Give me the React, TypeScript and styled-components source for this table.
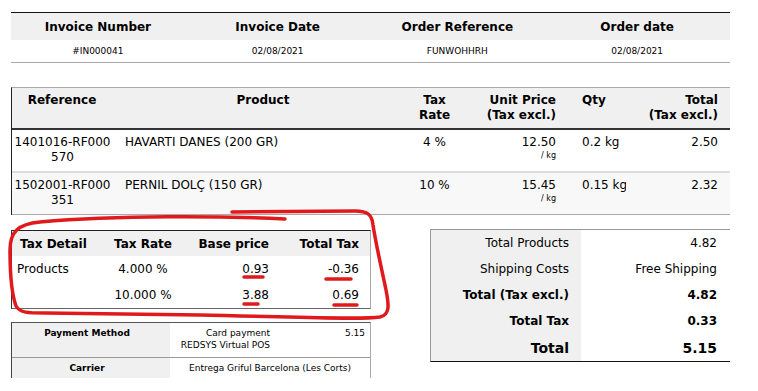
import styled, { createGlobalStyle } from 'styled-components';

const GlobalStyle = createGlobalStyle`
  html, body {
    margin: 0;
    padding: 0;
    background: #fff;
  }
  body {
    font-family: 'DejaVu Sans', 'Liberation Sans', sans-serif;
    color: #000;
  }
`;

interface ProductLine {
  reference: string;
  name: string;
  taxRate: string;
  unitPrice: string;
  qty: string;
  total: string;
}

const products: ProductLine[] = [
  { reference: '1401016-RF000570', name: 'HAVARTI DANES (200 GR)', taxRate: '4 %', unitPrice: '12.50', qty: '0.2 kg', total: '2.50' },
  { reference: '1502001-RF000351', name: 'PERNIL DOLÇ (150 GR)', taxRate: '10 %', unitPrice: '15.45', qty: '0.15 kg', total: '2.32' },
];

const totals = [
  { label: 'Total Products', value: '4.82', weight: 'normal', size: 12 },
  { label: 'Shipping Costs', value: 'Free Shipping', weight: 'normal', size: 12 },
  { label: 'Total (Tax excl.)', value: '4.82', weight: 'bold', size: 12 },
  { label: 'Total Tax', value: '0.33', weight: 'bold', size: 12 },
  { label: 'Total', value: '5.15', weight: 'bold', size: 14 },
];

function App() {
  return (
    <Page>
      <GlobalStyle />
      <InfoGrid>
        <InfoHead>Invoice Number</InfoHead>
        <InfoHead>Invoice Date</InfoHead>
        <InfoHead>Order Reference</InfoHead>
        <InfoHead>Order date</InfoHead>
        <InfoCell>#IN000041</InfoCell>
        <InfoCell>02/08/2021</InfoCell>
        <InfoCell>FUNWOHHRH</InfoCell>
        <InfoCell>02/08/2021</InfoCell>
      </InfoGrid>

      <ProductGrid>
        <ProdHead $align="center" $pl={4} $pr={12}>Reference</ProdHead>
        <ProdHead $align="center">Product</ProdHead>
        <ProdHead $align="center">Tax<br />Rate</ProdHead>
        <ProdHead $align="right">Unit Price<br />(Tax excl.)</ProdHead>
        <ProdHead $align="left" $pl={14}>Qty</ProdHead>
        <ProdHead $align="right">Total<br />(Tax excl.)</ProdHead>
        {products.map((p, i) => (
          <ProductRow key={p.reference} $odd={i % 2 === 1} $last={i === products.length - 1}>
            <RefCell>{p.reference}</RefCell>
            <ProdCell $align="left" $pl={5}>{p.name}</ProdCell>
            <ProdCell $align="center">{p.taxRate}</ProdCell>
            <ProdCell $align="right">
              {p.unitPrice}
              <Unit>/ kg</Unit>
            </ProdCell>
            <ProdCell $align="left" $pl={14} $pr={0}>{p.qty}</ProdCell>
            <ProdCell $align="right">{p.total}</ProdCell>
          </ProductRow>
        ))}
      </ProductGrid>

      <Bottom>
        <LeftColumn>
          <TaxGrid>
            <TaxHead $align="left">Tax Detail</TaxHead>
            <TaxHead $align="center">Tax Rate</TaxHead>
            <TaxHead $align="right">Base price</TaxHead>
            <TaxHead $align="right">Total Tax</TaxHead>
            <TaxCell $align="left">Products</TaxCell>
            <TaxCell $align="center">4.000 %</TaxCell>
            <TaxCell $align="right">0.93</TaxCell>
            <TaxCell $align="right">-0.36</TaxCell>
            <TaxCell $align="left"></TaxCell>
            <TaxCell $align="center">10.000 %</TaxCell>
            <TaxCell $align="right">3.88</TaxCell>
            <TaxCell $align="right">0.69</TaxCell>
          </TaxGrid>

          <PaymentGrid>
            <PayLabel $tall>Payment Method</PayLabel>
            <PayName>
              Card payment
              <br />
              REDSYS Virtual POS
            </PayName>
            <PayAmount>5.15</PayAmount>
            <PayLabel>Carrier</PayLabel>
            <PayCarrier>Entrega Griful Barcelona (Les Corts)</PayCarrier>
          </PaymentGrid>
        </LeftColumn>

        <TotalsGrid>
          {totals.map((t, i) => (
            <TotalsRow key={t.label} $last={i === totals.length - 1}>
              <TotalsLabel $weight={t.weight} $size={t.size}>{t.label}</TotalsLabel>
              <TotalsValue $weight={t.weight} $size={t.size}>{t.value}</TotalsValue>
            </TotalsRow>
          ))}
        </TotalsGrid>
      </Bottom>

      <Annotation width="758" height="391" viewBox="0 0 758 391">
        <path d="M 285 219 C 220 216, 120 215, 40 222 C 18 224, 10 232, 10 250 C 10 275, 12 295, 16 306 C 20 313, 28 313, 45 313 L 200 315 C 300 317, 360 320, 380 317 C 390 315, 389 305, 386 290 C 382 270, 376 245, 373 225 C 372 215, 368 211, 355 211 L 232 212" />
        <path d="M 244 277 L 263 277" />
        <path d="M 326 279 L 351 279" />
        <path d="M 244 304 L 258 304" />
        <path d="M 334 305 L 357 305" />
      </Annotation>
    </Page>
  );
}

export default App;

const Page = styled.div`
  position: relative;
  width: 758px;
  height: 391px;
  box-sizing: border-box;
  padding: 12px 28px 0 11px;
  overflow: hidden;
`;

const InfoGrid = styled.div`
  display: grid;
  grid-template-columns: repeat(4, 1fr);
  border-top: 1px solid #111;
  border-bottom: 1px solid #aaa;
`;

const InfoHead = styled.div`
  height: 27px;
  display: flex;
  align-items: center;
  justify-content: center;
  padding-right: 6px;
  background: #f0f0f0;
  font-size: 12px;
  font-weight: bold;
`;

const InfoCell = styled.div`
  height: 22px;
  display: flex;
  align-items: center;
  justify-content: center;
  padding-right: 6px;
  font-size: 9px;
`;

const ProductGrid = styled.div`
  margin-top: 24px;
  display: grid;
  grid-template-columns: 108px 286px 57px 105px 58px 1fr;
  border-top: 1px solid #aaa;
  border-left: 1px solid #222;
`;

const ProdHead = styled.div<{ $align: string; $pl?: number; $pr?: number }>`
  height: 42px;
  box-sizing: border-box;
  padding: 5px ${(p) => p.$pr ?? 12}px 0 ${(p) => p.$pl ?? 12}px;
  background: #f0f0f0;
  border-bottom: 2px solid #333;
  font-size: 12px;
  font-weight: bold;
  line-height: 15px;
  text-align: ${(p) => p.$align};
`;

const ProductRow = styled.div<{ $odd: boolean; $last: boolean }>`
  display: contents;

  & > div {
    height: ${(p) => (p.$last ? '42px' : '43px')};
    background: ${(p) => (p.$odd ? '#f8f8f8' : '#fff')};
    border-bottom: ${(p) => (p.$last ? '1px solid #aaa' : '2px solid #ddd')};
  }
`;

const ProdCell = styled.div<{ $align: string; $pl?: number; $pr?: number }>`
  box-sizing: border-box;
  padding: 5px ${(p) => p.$pr ?? 12}px 0 ${(p) => p.$pl ?? 12}px;
  font-size: 12px;
  line-height: 15px;
  text-align: ${(p) => p.$align};
  white-space: nowrap;
`;

const RefCell = styled.div`
  box-sizing: border-box;
  padding: 5px 8px 0 1px;
  font-size: 12px;
  line-height: 15px;
  text-align: center;
  word-break: break-all;
`;

const Unit = styled.div`
  font-size: 8px;
  line-height: 12px;
`;

const Bottom = styled.div`
  margin-top: 15px;
  display: grid;
  grid-template-columns: 360px 300px;
  justify-content: space-between;
  align-items: start;
`;

const LeftColumn = styled.div`
  display: flex;
  flex-direction: column;
  gap: 13px;
`;

const TaxGrid = styled.div`
  display: grid;
  grid-template-columns: 88px 86px 94px 1fr;
  border-top: 1px solid #222;
  border-left: 1px solid #333;
  border-right: 1px solid #aaa;
  border-bottom: 1px solid #666;
`;

const alignToJustify = (a: string) =>
  a === 'left' ? 'flex-start' : a === 'right' ? 'flex-end' : 'center';

const alignToPadding = (a: string) =>
  a === 'left' ? '0 4px 0 8px' : a === 'right' ? '0 11px 0 4px' : '0';

const TaxHead = styled.div<{ $align: string }>`
  height: 25px;
  display: flex;
  align-items: center;
  justify-content: ${(p) => alignToJustify(p.$align)};
  padding: ${(p) => alignToPadding(p.$align)};
  background: #f0f0f0;
  font-size: 12px;
  font-weight: bold;
  white-space: nowrap;
`;

const TaxCell = styled.div<{ $align: string }>`
  height: 26px;
  display: flex;
  align-items: center;
  justify-content: ${(p) => alignToJustify(p.$align)};
  padding: ${(p) => (p.$align === 'left' ? '0 4px 0 5px' : alignToPadding(p.$align))};
  font-size: 12px;
  white-space: nowrap;
`;

const PaymentGrid = styled.div`
  display: grid;
  grid-template-columns: 158px 106px 1fr;
  border-top: 1px solid #555;
  border-left: 1px solid #444;
  border-right: 1px solid #aaa;
  font-size: 9px;
  line-height: 12px;
`;

const PayLabel = styled.div<{ $tall?: boolean }>`
  height: ${(p) => (p.$tall ? '35px' : '20px')};
  box-sizing: border-box;
  padding: 4px 8px 0 0;
  background: #f0f0f0;
  font-weight: bold;
  text-align: center;
  border-bottom: ${(p) => (p.$tall ? '1px solid #999' : 'none')};
`;

const PayName = styled.div`
  padding: 4px 6px 0 0;
  text-align: right;
  white-space: nowrap;
  border-bottom: 1px solid #999;
`;

const PayAmount = styled.div`
  padding: 4px 5px 0 0;
  text-align: right;
  border-bottom: 1px solid #999;
`;

const PayCarrier = styled.div`
  grid-column: span 2;
  padding: 4px 0 0 0;
  text-align: center;
  white-space: nowrap;
`;

const TotalsGrid = styled.div`
  display: grid;
  grid-template-columns: 150px 1fr;
  border-top: 1px solid #999;
  border-left: 1px solid #999;
  border-bottom: 1px solid #111;
  margin-top: -1px;
`;

const TotalsRow = styled.div<{ $last: boolean }>`
  display: contents;

  & > div {
    height: ${(p) => (p.$last ? '27px' : '26px')};
  }
`;

const TotalsLabel = styled.div<{ $weight: string; $size: number }>`
  display: flex;
  align-items: center;
  justify-content: flex-end;
  padding-right: 12px;
  background: #f0f0f0;
  font-size: ${(p) => p.$size}px;
  font-weight: ${(p) => p.$weight};
`;

const TotalsValue = styled.div<{ $weight: string; $size: number }>`
  display: flex;
  align-items: center;
  justify-content: flex-end;
  padding-right: 13px;
  font-size: ${(p) => p.$size}px;
  font-weight: ${(p) => p.$weight};
`;

const Annotation = styled.svg`
  position: absolute;
  top: 0;
  left: 0;
  pointer-events: none;

  path {
    fill: none;
    stroke: #e01a1c;
    stroke-width: 3.5;
    stroke-linecap: round;
    stroke-linejoin: round;
  }
`;
